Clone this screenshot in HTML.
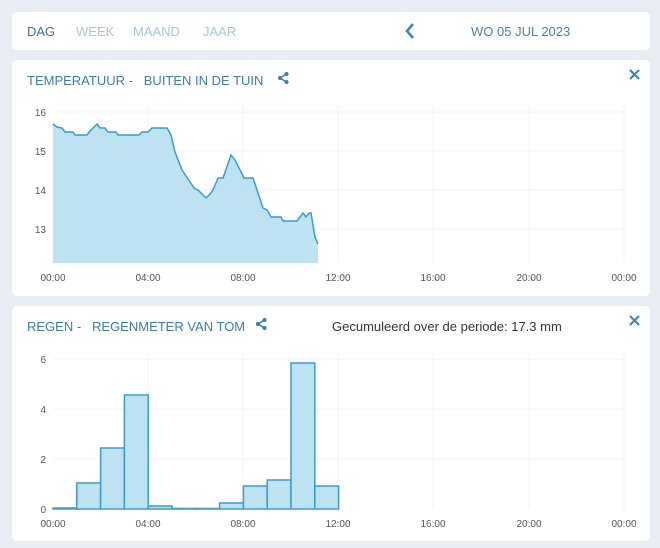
<!DOCTYPE html>
<html><head><meta charset="utf-8"><style>
body{margin:0;width:660px;height:548px;background:#e8edf3;font-family:"Liberation Sans",sans-serif;position:relative;overflow:hidden}
.card{position:absolute;left:12px;width:638px;background:#fff;border-radius:5px}
.t{position:absolute;font-size:13px;color:#3f7c9c;white-space:nowrap}
svg{position:absolute;left:0;top:0}
</style></head><body>
<div class="card" style="top:12px;height:38px"></div>
<div class="card" style="top:60px;height:236px"></div>
<div class="card" style="top:306px;height:235px"></div>
<div class="t" style="left:27px;top:24px;color:#3c6f8c">DAG</div>
<div class="t" style="left:76px;top:24px;color:#a8c4d4">WEEK</div>
<div class="t" style="left:133px;top:24px;color:#a8c4d4">MAAND</div>
<div class="t" style="left:203px;top:24px;color:#a8c4d4">JAAR</div>
<div class="t" style="left:471px;top:24px;color:#4e7f9b">WO 05 JUL 2023</div>
<div class="t" style="left:27px;top:73px">TEMPERATUUR -&nbsp;&nbsp; BUITEN IN DE TUIN</div>
<div class="t" style="left:27px;top:319px">REGEN -&nbsp;&nbsp; REGENMETER VAN TOM</div>
<div class="t" style="left:332px;top:319px;color:#333">Gecumuleerd over de periode: 17.3 mm</div>
<svg width="660" height="548" font-family="Liberation Sans, sans-serif" font-size="10" fill="#555">
<path d="M413 24 l-6 7 l6 7" stroke="#3f86b0" stroke-width="2.5" fill="none"/>
<g stroke="#3f86b0" stroke-width="2.2"><path d="M630 70 l9 9 M639 70 l-9 9"/><path d="M630 316 l9 9 M639 316 l-9 9"/></g>
<g fill="#3f7c9c"><circle cx="286.5" cy="74" r="2"/><circle cx="280" cy="78" r="2"/><circle cx="286.5" cy="82" r="2"/><circle cx="264.5" cy="320" r="2"/><circle cx="258" cy="324" r="2"/><circle cx="264.5" cy="328" r="2"/></g>
<g stroke="#3f7c9c" stroke-width="1.6" fill="none"><path d="M286.5 74 L280 78 L286.5 82"/><path d="M264.5 320 L258 324 L264.5 328"/></g>
<g stroke="#f1f3f5" stroke-width="1">
<path d="M53 112H626M53 151H626M53 190H626M53 229H626"/>
<path d="M148 106V263M243 106V263M338 106V263M433 106V263M529 106V263M624 106V263"/>
<path d="M53 359H626M53 409H626M53 459H626"/>
<path d="M148 353V509M243 353V509M338 353V509M433 353V509M529 353V509M624 353V509"/>
</g>
<path d="M53 263 L53 124 L57 127 L62 128 L65 132 L73 132 L75 135 L87 135 L90 131 L97 124 L100 128 L105 128 L108 132 L116 132 L118 135 L139 135 L142 132 L148 132 L152 128 L167 128 L171 135 L175 152 L182 170 L192 185 L195 189 L198 190 L206 198 L210 194 L213 190 L218 178 L223 178 L231 155 L235 160 L244 178 L253 178 L263 208 L267 210 L271 217 L281 217 L283 221 L297 221 L303 213 L306 217 L309 213 L311 213 L315 237 L318 244 L318 263 Z" fill="#bde3f3"/>
<path d="M53 124 L57 127 L62 128 L65 132 L73 132 L75 135 L87 135 L90 131 L97 124 L100 128 L105 128 L108 132 L116 132 L118 135 L139 135 L142 132 L148 132 L152 128 L167 128 L171 135 L175 152 L182 170 L192 185 L195 189 L198 190 L206 198 L210 194 L213 190 L218 178 L223 178 L231 155 L235 160 L244 178 L253 178 L263 208 L267 210 L271 217 L281 217 L283 221 L297 221 L303 213 L306 217 L309 213 L311 213 L315 237 L318 244" fill="none" stroke="#3b9cc6" stroke-width="1.5"/>
<g text-anchor="end"><text x="46" y="116">16</text><text x="46" y="155">15</text><text x="46" y="194">14</text><text x="46" y="233">13</text>
<text x="46" y="363">6</text><text x="46" y="413">4</text><text x="46" y="463">2</text><text x="46" y="513">0</text></g>
<g text-anchor="middle"><text x="53" y="281">00:00</text><text x="148" y="281">04:00</text><text x="243" y="281">08:00</text><text x="338" y="281">12:00</text><text x="433" y="281">16:00</text><text x="529" y="281">20:00</text><text x="624" y="281">00:00</text>
<text x="53" y="527">00:00</text><text x="148" y="527">04:00</text><text x="243" y="527">08:00</text><text x="338" y="527">12:00</text><text x="433" y="527">16:00</text><text x="529" y="527">20:00</text><text x="624" y="527">00:00</text></g>
<g fill="#bde3f3" stroke="#3b9cc6" stroke-width="1.5">
<rect x="53" y="508" width="23.8" height="1"/>
<rect x="76.8" y="483" width="23.8" height="26"/>
<rect x="100.6" y="448" width="23.8" height="61"/>
<rect x="124.4" y="395" width="23.8" height="114"/>
<rect x="148.2" y="506" width="23.8" height="3"/>
<rect x="172" y="508.5" width="23.8" height="0.5"/>
<rect x="195.8" y="508.5" width="23.8" height="0.5"/>
<rect x="219.6" y="503" width="23.8" height="6"/>
<rect x="243.4" y="486" width="23.8" height="23"/>
<rect x="267.2" y="480" width="23.8" height="29"/>
<rect x="291" y="363" width="23.8" height="146"/>
<rect x="314.8" y="486" width="23.8" height="23"/>
</g>
</svg>
</body></html>
